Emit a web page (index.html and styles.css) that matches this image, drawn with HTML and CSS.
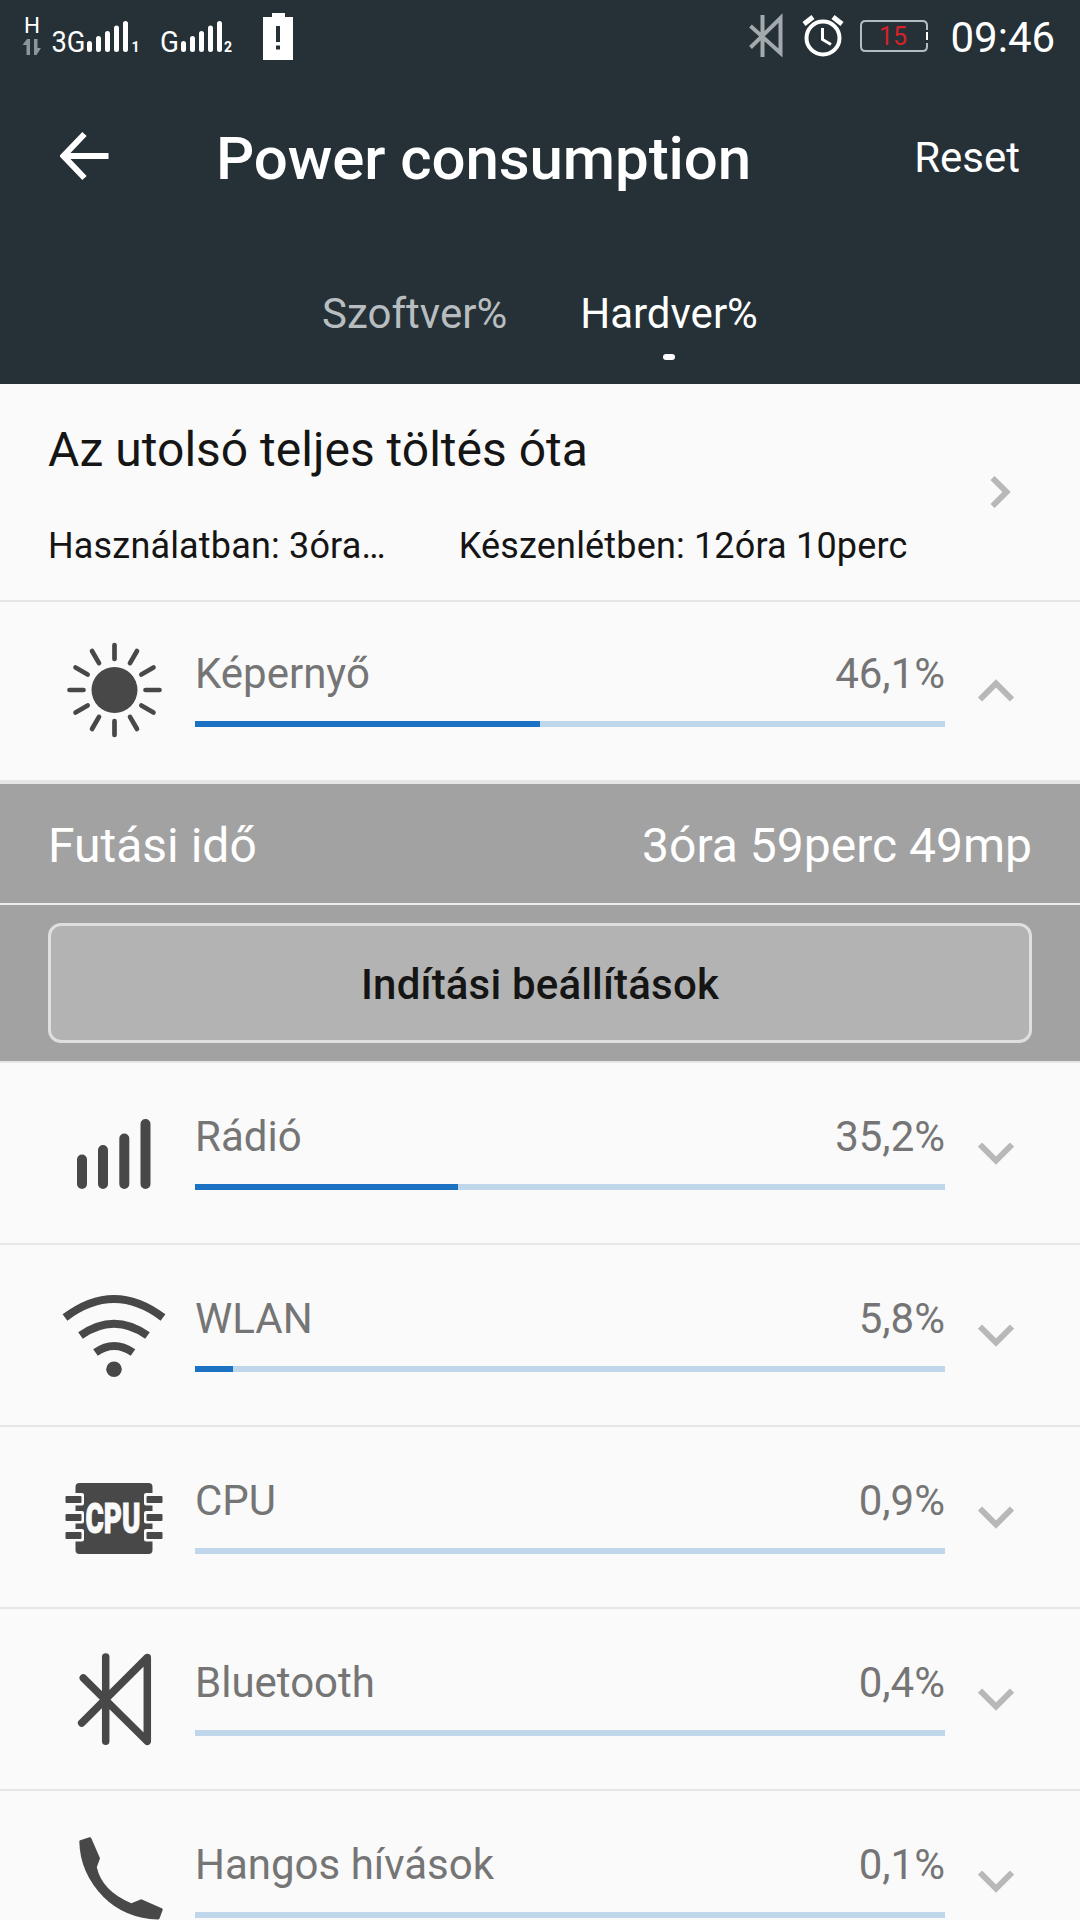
FILE: index.html
```html
<!DOCTYPE html>
<html lang="hu">
<head>
<meta charset="utf-8">
<title>Power consumption</title>
<link rel="stylesheet" href="styles.css">
</head>
<body>
<header class="header">
  <div class="status">
    <svg class="status-left" width="320" height="76" viewBox="0 0 320 76">
      <g class="status-text">
        <text x="24" y="33" font-size="22" textLength="16" lengthAdjust="spacingAndGlyphs">H</text>
        <text class="thin" x="51.500" y="52" font-size="29" textLength="34" lengthAdjust="spacingAndGlyphs">3G</text>
        <text class="small" x="131.500" y="52" font-size="14">1</text>
        <text class="thin" x="160" y="52" font-size="29" textLength="19" lengthAdjust="spacingAndGlyphs">G</text>
        <text class="small" x="224" y="52" font-size="14">2</text>
      </g>
      <path class="faded-fill" d="M22.500 45 27 39h3v16h-3.500V45zM34 39h3.500v9H41l-4.500 7H34z"/>
      <g class="bars">
        <path d="M89.500 43.500v6M98.500 38.500v11M107.500 33.500v16M116.500 28v21.500M125.500 23.500v26"/>
        <path d="M183.500 43.500v6M192.500 38.500v11M201.500 33.500v16M210.500 28v21.500M219.500 23.500v26"/>
      </g>
      <path class="white-fill" fill-rule="evenodd" d="M272 13h13v4h8v43h-30V17h9zM276 26v16h4V26zM276 45.500v4h4v-4z"/>
    </svg>
    <svg class="status-right" width="350" height="76" viewBox="0 0 350 76">
      <path class="faded-line" d="M20.500 26 50.500 53V18L20.500 47.500M32.500 15v42"/>
      <g class="white-line">
        <circle cx="93" cy="38" r="16.500" stroke-width="4"/>
        <path stroke-width="3" d="M92.500 28v11.500l8.500 5"/>
        <path stroke-width="5" d="M74 24l9-7M112 24l-9-7"/>
      </g>
      <path class="battery" d="M197 30v-4.500q0-4.500-4.500-4.500h-57q-4.500 0-4.500 4.500v21q0 4.500 4.500 4.500h57q4.500 0 4.500-4.500V43"/>
      <path class="battery-tip" d="M197 32v8"/>
      <text class="battery-level" x="163" y="45" font-size="25" text-anchor="middle">15</text>
      <text class="clock" x="220.500" y="52" font-size="42">09:46</text>
    </svg>
  </div>
  <div class="toolbar">
    <svg class="back" width="50" height="50" viewBox="0 0 50 50"><path d="M48.500 25H4M24.500 3 3.500 25l21 22"/></svg>
    <h1 class="title">Power consumption</h1>
    <span class="reset">Reset</span>
  </div>
  <nav class="tabs">
    <span class="tab">Szoftver%</span>
    <span class="tab tab-active">Hardver%</span>
  </nav>
</header>
<main>
  <section class="summary">
    <div class="summary-text">
      <h2 class="summary-title">Az utolsó teljes töltés óta</h2>
      <div class="summary-times">
        <span class="in-use">Használatban: 3óra…</span>
        <span>Készenlétben: 12óra 10perc</span>
      </div>
    </div>
    <svg class="next" width="24" height="36" viewBox="0 0 24 36"><path d="M3.500 4l14 14-14 14"/></svg>
  </section>

  <section class="row row-open">
    <svg class="icon" width="132" height="120" viewBox="0 1 132 120">
      <circle class="icon-fill" cx="66.500" cy="60" r="23"/>
      <path class="icon-line" stroke-width="4.700" d="M66.500 29V15M66.500 91v14M35.500 60h-14M97.500 60h14M82 33.150l7-12.120M51 33.150l-7-12.120M82 86.850l7 12.120M51 86.850l-7 12.120M93.350 44.500l12.120-7M39.650 44.500l-12.120-7M93.350 75.500l12.120 7M39.650 75.500l-12.120 7"/>
    </svg>
    <div class="usage">
      <div class="labels"><span>Képernyő</span><span>46,1%</span></div>
      <div class="track"><div class="fill" style="width:46%"></div></div>
    </div>
    <svg class="chevron chevron-up" width="36" height="23" viewBox="0 0 36 23"><path d="M2 2.500l16 16 16-16"/></svg>
  </section>

  <section class="details">
    <div class="runtime"><span>Futási idő</span><span>3óra 59perc 49mp</span></div>
    <div class="action"><button class="button">Indítási beállítások</button></div>
  </section>

  <section class="row">
    <svg class="icon" width="132" height="120" viewBox="0 0 132 120">
      <path class="icon-line" stroke-width="10" d="M34 65.500V90M55 56v34M76.300 44.500V90M97.500 30v60"/>
    </svg>
    <div class="usage">
      <div class="labels"><span>Rádió</span><span>35,2%</span></div>
      <div class="track"><div class="fill" style="width:35.1%"></div></div>
    </div>
    <svg class="chevron" width="36" height="23" viewBox="0 0 36 23"><path d="M2 2.500l16 16 16-16"/></svg>
  </section>

  <section class="row">
    <svg class="icon" width="132" height="120" viewBox="0 0 132 120">
      <path class="icon-line butt" stroke-width="8" d="M17 41.500Q66 4.500 115 41.500M32.500 59.500Q66 36 99.500 59.500M47.500 76.500Q66 63.500 85 76.500"/>
      <circle class="icon-fill" cx="66" cy="93.300" r="7.800"/>
    </svg>
    <div class="usage">
      <div class="labels"><span>WLAN</span><span>5,8%</span></div>
      <div class="track"><div class="fill" style="width:5.1%"></div></div>
    </div>
    <svg class="chevron" width="36" height="23" viewBox="0 0 36 23"><path d="M2 2.500l16 16 16-16"/></svg>
  </section>

  <section class="row">
    <svg class="icon" width="132" height="120" viewBox="0 -1 132 120">
      <rect class="icon-fill" x="27.500" y="24" width="77" height="71" rx="4"/>
      <g class="pins">
        <rect x="14" y="34" width="22" height="12.500" rx="2"/><rect x="14" y="52" width="22" height="12.500" rx="2"/><rect x="14" y="70" width="22" height="12.500" rx="2"/>
        <rect x="96" y="34" width="22" height="12.500" rx="2"/><rect x="96" y="52" width="22" height="12.500" rx="2"/><rect x="96" y="70" width="22" height="12.500" rx="2"/>
      </g>
      <g class="icon-fill">
        <rect x="17.500" y="37" width="16" height="7" rx="1"/><rect x="17.500" y="55" width="16" height="7" rx="1"/><rect x="17.500" y="73" width="16" height="7" rx="1"/>
        <rect x="98.500" y="37" width="16" height="7" rx="1"/><rect x="98.500" y="55" width="16" height="7" rx="1"/><rect x="98.500" y="73" width="16" height="7" rx="1"/>
      </g>
      <text class="cpu" x="37.500" y="73.500" font-size="42" textLength="55" lengthAdjust="spacingAndGlyphs">CPU</text>
    </svg>
    <div class="usage">
      <div class="labels"><span>CPU</span><span>0,9%</span></div>
      <div class="track"></div>
    </div>
    <svg class="chevron" width="36" height="23" viewBox="0 0 36 23"><path d="M2 2.500l16 16 16-16"/></svg>
  </section>

  <section class="row">
    <svg class="icon" width="132" height="120" viewBox="0 0 132 120">
      <path class="icon-line" stroke-width="7.500" d="M57.700 17v84.300M35.300 38l64 63.300V17.500L33.700 83"/>
    </svg>
    <div class="usage">
      <div class="labels"><span>Bluetooth</span><span>0,4%</span></div>
      <div class="track"></div>
    </div>
    <svg class="chevron" width="36" height="23" viewBox="0 0 36 23"><path d="M2 2.500l16 16 16-16"/></svg>
  </section>

  <section class="row">
    <svg class="icon" width="132" height="120" viewBox="0 0 132 120">
      <path class="icon-fill" d="M31.300 19.500q0-.8.800-1.200L41.500 15.300q1.200-.3 1.700.8L52 36.300l-3.200 9Q54 69 83.300 81.300L93.300 77.300 113.800 86.300q1.300.6.900 1.800L111.500 96.500q-.4 1-1.500 1-33-1-54.500-22.500Q32 51 31.300 19.500z"/>
    </svg>
    <div class="usage">
      <div class="labels"><span>Hangos hívások</span><span>0,1%</span></div>
      <div class="track"></div>
    </div>
    <svg class="chevron" width="36" height="23" viewBox="0 0 36 23"><path d="M2 2.500l16 16 16-16"/></svg>
  </section>
</main>
</body>
</html>
```

FILE: styles.css
```css
* { box-sizing: border-box; }
body {
  margin: 0;
  width: 1080px;
  height: 1920px;
  overflow: hidden;
  background: #fafafa;
  color: #151515;
  font-family: Roboto, sans-serif;
}
svg { display: block; flex: none; fill: none; }
h1, h2 { margin: 0; font-weight: 400; }

.header { height: 384px; background: #253137; color: #fff; }
.status { display: flex; justify-content: space-between; height: 76px; }
.status-text, .clock, .white-fill { fill: #fff; }
.thin { font-weight: 400; }
.small { font-weight: 700; }
.faded-fill { fill: #8d9598; }
.bars { stroke: #fff; stroke-width: 5; stroke-linecap: round; }
.white-line { stroke: #fff; }
.faded-line { stroke: #a3aaad; stroke-width: 4; }
.battery { stroke: #b4bcc0; stroke-width: 2; }
.battery-tip { stroke: #fff; stroke-width: 2; }
.battery-level { fill: #d32328; }

.toolbar { display: flex; align-items: center; height: 160px; padding: 0 60px; }
.back { stroke: #fff; stroke-width: 6; }
.title { flex: 1; margin-left: 106px; padding-top: 5px; font-size: 60px; font-weight: 500; line-height: 70px; letter-spacing: -0.08px; white-space: nowrap; }
.reset { padding-top: 3px; font-size: 42px; }

.tabs { display: flex; justify-content: center; gap: 73px; padding-top: 53px; }
.tab { font-size: 42px; line-height: 50px; color: #b8bec0; }
.tab-active { display: flex; flex-direction: column; align-items: center; color: #fff; }
.tab-active::after { content: ""; width: 12px; height: 6px; margin-top: 15px; border-radius: 3px; background: #fff; }

.summary { display: flex; justify-content: space-between; align-items: center; height: 218px; padding: 0 67px 0 48px; border-bottom: 2px solid #e6e6e6; }
.summary-title { padding-top: 4px; font-size: 48px; line-height: 58px; }
.summary-times { display: flex; gap: 73px; margin-top: 46px; font-size: 36px; line-height: 42px; letter-spacing: 0.17px; white-space: nowrap; }
.next { stroke: #b8b8b8; stroke-width: 6; }

.row { display: flex; align-items: flex-end; height: 182px; padding: 0 66px 0 48px; border-bottom: 2px solid #e6e6e6; }
.row-open { height: 180px; }
.icon { margin-bottom: 29px; }
.icon-fill { fill: #484848; }
.icon-line { stroke: #484848; stroke-linecap: round; stroke-linejoin: round; }
.icon-line.butt { stroke-linecap: butt; }
.pins, .cpu { fill: #fafafa; }
.cpu { font-weight: 900; stroke: #fafafa; stroke-width: 1; }
.usage { flex: 1; margin: 0 33px 53px 15px; }
.labels { display: flex; justify-content: space-between; color: #757575; font-size: 42px; line-height: 50px; }
.track { height: 6px; margin-top: 22px; background: #bfd6eb; }
.fill { height: 100%; background: #1b72c2; }
.chevron { margin-bottom: 78px; stroke: #b8b8b8; stroke-width: 6; }
.chevron-up { transform: scaleY(-1); }

.details { background: #a2a2a2; border-top: 2px solid #e6e6e6; border-bottom: 2px solid #e6e6e6; }
.runtime { display: flex; justify-content: space-between; align-items: center; height: 121px; padding: 4px 48px 0; border-bottom: 2px solid #ececec; color: #fff; font-size: 48px; }
.action { height: 156px; padding: 18px 48px; }
.button { width: 100%; height: 120px; padding: 3px 0 0; border: 3px solid #dfdfdf; border-radius: 13px; background: #b3b3b3; color: #151515; font: 500 42px Roboto, sans-serif; letter-spacing: 0.18px; }
```
